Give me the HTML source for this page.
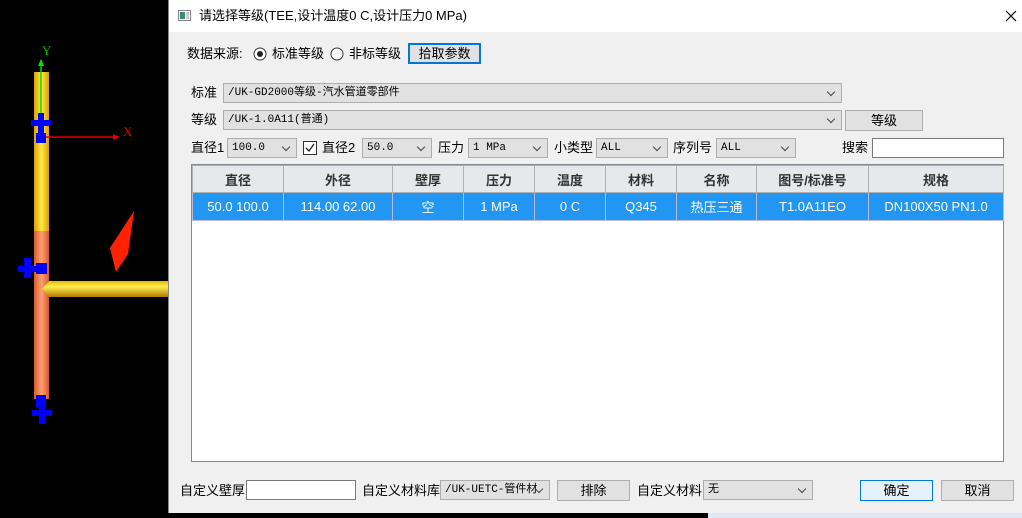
<!DOCTYPE html>
<html><head><meta charset="utf-8">
<style>
*{box-sizing:border-box;margin:0;padding:0}
body{width:1022px;height:518px;background:#000;position:relative;overflow:hidden;font-family:"Liberation Sans","Noto Sans CJK SC",sans-serif;font-size:13px;color:#000}
.a{position:absolute}
.dlg{left:169px;top:0;width:853px;height:513px;background:#f0f0f0;box-shadow:-1px 0 0 #888}
.title{left:0;top:0;width:853px;height:32px;background:#fff}
.cb{position:absolute;background:#e1e1e1;border:1px solid #adadad;height:20px;font-family:"Liberation Mono","Noto Sans CJK SC",monospace;font-size:11px;line-height:18px;padding-left:4px;white-space:nowrap;overflow:hidden}
.cb:after{content:"";position:absolute;right:7px;top:5px;width:5px;height:5px;border-right:1px solid #444;border-bottom:1px solid #444;transform:rotate(45deg)}
.btn{position:absolute;background:#e1e1e1;border:1px solid #adadad;height:21px;text-align:center;line-height:19px}
.lbl{position:absolute;line-height:16px}
table{border-collapse:collapse;table-layout:fixed}
td{border:1px solid #c8c8c8;text-align:center;height:28px;font-size:13px}
th{border:1px solid #b0b0b0;background:#e6e8eb;font-weight:bold;height:27px;font-size:13px;color:#333}
tr.sel td{background:#2196f3;color:#fff;border-color:#bbd}
</style></head><body>
<svg class="a" style="left:0;top:0" width="169" height="518">
<defs>
<linearGradient id="gy" x1="0" x2="1"><stop offset="0" stop-color="#d9a000"/><stop offset=".5" stop-color="#ffe84a"/><stop offset="1" stop-color="#d9a000"/></linearGradient>
<linearGradient id="go" x1="0" x2="1"><stop offset="0" stop-color="#d55a30"/><stop offset=".5" stop-color="#ffa070"/><stop offset="1" stop-color="#d55a30"/></linearGradient>
<linearGradient id="gh" x1="0" x2="0" y1="0" y2="1"><stop offset="0" stop-color="#e6b800"/><stop offset=".35" stop-color="#fff050"/><stop offset="1" stop-color="#b07800"/></linearGradient>
</defs>
<rect x="34" y="72" width="15" height="160" fill="url(#gy)"/>
<rect x="34" y="231" width="15" height="168" fill="url(#go)"/>
<polygon points="49,281 168,281 168,297 49,297 42,289" fill="url(#gh)"/>
<line x1="41" y1="60" x2="41" y2="135" stroke="#00e000" stroke-width="1.5"/>
<polygon points="41,59 38,66 44,66" fill="#00e000"/>
<text x="42" y="55" fill="#00c000" font-size="13" font-family="Liberation Serif">Y</text>
<line x1="44" y1="137" x2="118" y2="137" stroke="#e00000" stroke-width="1.5"/>
<polygon points="120,137 113,134 113,140" fill="#e00000"/>
<text x="123" y="136" fill="#e00000" font-size="13" font-family="Liberation Serif">X</text>
<rect x="31" y="120" width="20" height="6" fill="#0000ff"/><rect x="38" y="113" width="6" height="20" fill="#0000ff"/>
<rect x="36" y="133" width="10" height="10" fill="#0000ff"/>
<rect x="18" y="266" width="28" height="6" fill="#0000ff"/><rect x="24" y="258" width="7" height="20" fill="#0000ff"/><rect x="36" y="263" width="11" height="11" fill="#0000ff"/>
<rect x="36" y="395" width="10" height="12" fill="#0000ff"/><rect x="32" y="410" width="20" height="6" fill="#0000ff"/><rect x="39" y="404" width="6" height="20" fill="#0000ff"/>
<polygon points="134,211 128,254 116,272 110,248" fill="#ff2200"/>
</svg>
<div class="a" style="left:708px;top:513px;width:314px;height:5px;background:#dce8f5"></div>
<div class="a dlg">
 <div class="a title">
  <svg class="a" style="left:9px;top:10px" width="13" height="11"><rect x=".5" y=".5" width="12" height="10" fill="#fff" stroke="#888"/><rect x="2" y="2" width="5" height="7" fill="#3a8a7a"/><rect x="8" y="2" width="3" height="7" fill="#ccc"/></svg>
  <div class="lbl" style="left:30px;top:8px;font-size:13px">请选择等级(TEE,设计温度0 C,设计压力0 MPa)</div>
  <svg class="a" style="left:836px;top:10px" width="12" height="12"><path d="M1 1L11 11M11 1L1 11" stroke="#000" stroke-width="1.2"/></svg>
 </div>
 <div class="lbl" style="left:18px;top:46px">数据来源:</div>
 <svg class="a" style="left:84px;top:47px" width="14" height="14"><circle cx="7" cy="7" r="6" fill="#fff" stroke="#333"/><circle cx="7" cy="7" r="3" fill="#222"/></svg>
 <div class="lbl" style="left:103px;top:46px">标准等级</div>
 <svg class="a" style="left:161px;top:47px" width="14" height="14"><circle cx="7" cy="7" r="6" fill="#fff" stroke="#333"/></svg>
 <div class="lbl" style="left:180px;top:46px">非标等级</div>
 <div class="btn" style="left:239px;top:43px;width:73px;border:2px solid #0078d7;line-height:17px">拾取参数</div>

 <div class="lbl" style="left:22px;top:85px">标准</div>
 <div class="cb" style="left:54px;top:83px;width:619px">/UK-GD2000等级-汽水管道零部件</div>
 <div class="lbl" style="left:22px;top:112px">等级</div>
 <div class="cb" style="left:54px;top:110px;width:619px">/UK-1.0A11(普通)</div>
 <div class="btn" style="left:676px;top:110px;width:78px">等级</div>

 <div class="lbl" style="left:22px;top:140px">直径1</div>
 <div class="cb" style="left:58px;top:138px;width:70px">100.0</div>
 <svg class="a" style="left:134px;top:141px" width="14" height="14"><rect x=".5" y=".5" width="13" height="13" fill="#fff" stroke="#333"/><path d="M3 7l3 3 5-7" stroke="#222" fill="none" stroke-width="1.3"/></svg>
 <div class="lbl" style="left:153px;top:140px">直径2</div>
 <div class="cb" style="left:193px;top:138px;width:70px">50.0</div>
 <div class="lbl" style="left:269px;top:140px">压力</div>
 <div class="cb" style="left:299px;top:138px;width:80px">1 MPa</div>
 <div class="lbl" style="left:385px;top:140px">小类型</div>
 <div class="cb" style="left:427px;top:138px;width:72px">ALL</div>
 <div class="lbl" style="left:504px;top:140px">序列号</div>
 <div class="cb" style="left:547px;top:138px;width:80px">ALL</div>
 <div class="lbl" style="left:673px;top:140px">搜索</div>
 <div class="a" style="left:703px;top:138px;width:132px;height:20px;background:#fff;border:1px solid #7a7a7a"></div>

 <div class="a" style="left:22px;top:164px;width:813px;height:298px;background:#fff;border:1px solid #828790">
  <table style="width:811px">
   <colgroup><col style="width:91px"><col style="width:109px"><col style="width:71px"><col style="width:71px"><col style="width:71px"><col style="width:71px"><col style="width:80px"><col style="width:112px"><col style="width:135px"></colgroup>
   <tr><th>直径</th><th>外径</th><th>壁厚</th><th>压力</th><th>温度</th><th>材料</th><th>名称</th><th>图号/标准号</th><th>规格</th></tr>
   <tr class="sel"><td>50.0 100.0</td><td>114.00 62.00</td><td>空</td><td>1 MPa</td><td>0 C</td><td>Q345</td><td>热压三通</td><td>T1.0A11EO</td><td>DN100X50 PN1.0</td></tr>
  </table>
 </div>

 <div class="lbl" style="left:11px;top:483px">自定义壁厚</div>
 <div class="a" style="left:77px;top:480px;width:110px;height:20px;background:#fff;border:1px solid #7a7a7a"></div>
 <div class="lbl" style="left:193px;top:483px">自定义材料库</div>
 <div class="cb" style="left:271px;top:480px;width:110px">/UK-UETC-管件材</div>
 <div class="btn" style="left:388px;top:480px;width:73px">排除</div>
 <div class="lbl" style="left:468px;top:483px">自定义材料</div>
 <div class="cb" style="left:534px;top:480px;width:110px">无</div>
 <div class="btn" style="left:691px;top:480px;width:73px;background:#e5f1fb;border-color:#0078d7">确定</div>
 <div class="btn" style="left:772px;top:480px;width:73px">取消</div>
</div>
</body></html>
